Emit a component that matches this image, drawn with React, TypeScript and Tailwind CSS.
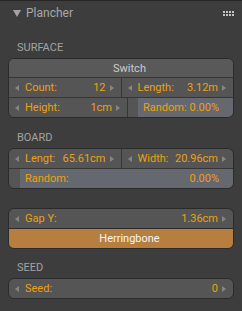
import React from "react";

const FONT = { fontFamily: 'Roboto, "Open Sans", sans-serif' };

function Arrow({ dir }: { dir: "left" | "right" }) {
  return (
    <svg width="4" height="6" viewBox="0 0 4 6" className="shrink-0">
      <path d={dir === "left" ? "M4 0 L0 3 L4 6 Z" : "M0 0 L4 3 L0 6 Z"} fill="#858585" />
    </svg>
  );
}

function NumField({ label, value }: { label: string; value: string }) {
  return (
    <div className="flex h-[19px] min-w-0 flex-1 items-center pl-[6px] pr-[7px]">
      <Arrow dir="left" />
      <span className="ml-[6px] text-[#eba10f]">{label}</span>
      <span className="ml-auto mr-[4px] text-[#eba10f]">{value}</span>
      <Arrow dir="right" />
    </div>
  );
}

function SliderField({ label, value, inset }: { label: string; value: string; inset: string }) {
  return (
    <div className="flex h-[19px] min-w-0 flex-1">
      <div className={`flex flex-1 items-center rounded-br-[5px] bg-[#666870] pl-[5px] pr-[14px] ${inset}`}>
        <span className="text-[#eba10f]">{label}</span>
        <span className="ml-auto text-[#eba10f]">{value}</span>
      </div>
    </div>
  );
}

function SectionLabel({ text, className }: { text: string; className: string }) {
  return (
    <div className={`h-[16px] pl-[9px] text-[11px] leading-[16px] text-[#a3a3a3] ${className}`}>{text}</div>
  );
}

export default function App() {
  return (
    <div
      className="h-[311px] w-[242px] overflow-hidden border-t border-[#262626] bg-[#3d3d3d] text-[11px] leading-[19px]"
      style={FONT}
    >
      {/* Header */}
      <div className="flex h-[24px] items-center pl-[13px] pr-[8px]">
        <svg width="8" height="7" viewBox="0 0 8 7">
          <path d="M0 0 H8 L4 7 Z" fill="#a2a2a2" />
        </svg>
        <span className="ml-[5px] text-[12px] text-[#a8a8a8]">Plancher</span>
        <div className="ml-auto grid grid-cols-4 gap-[1px]">
          {Array.from({ length: 8 }).map((_, i) => (
            <span key={i} className="h-[2px] w-[2px] bg-[#c4c4c4]" />
          ))}
        </div>
      </div>

      <div className="px-[8px]">
        <SectionLabel text="SURFACE" className="mt-[15px]" />
        <div className="mt-[2px] overflow-hidden rounded-[6px] border border-[#2b2b2b] bg-[#555555]">
          <div className="h-[19px] border-b border-[#363636] bg-[#595959] pl-[17px] text-center text-[#cccccc]">
            Switch
          </div>
          <div className="flex border-b border-[#363636]">
            <NumField label="Count:" value="12" />
            <div className="w-px bg-[#363636]" />
            <NumField label="Length:" value="3.12m" />
          </div>
          <div className="flex">
            <NumField label="Height:" value="1cm" />
            <div className="w-px bg-[#363636]" />
            <SliderField label="Random:" value="0.00%" inset="ml-[10px]" />
          </div>
        </div>

        <SectionLabel text="BOARD" className="mt-[12px]" />
        <div className="mt-[2px] overflow-hidden rounded-[6px] border border-[#2b2b2b] bg-[#555555]">
          <div className="flex border-b border-[#363636]">
            <NumField label="Lengt:" value="65.61cm" />
            <div className="w-px bg-[#363636]" />
            <NumField label="Width:" value="20.96cm" />
          </div>
          <div className="flex">
            <SliderField label="Random:" value="0.00%" inset="ml-[11px]" />
          </div>
        </div>

        <div className="mt-[19px] overflow-hidden rounded-[6px] border border-[#2b2b2b] bg-[#555555]">
          <div className="flex border-b border-[#2b2b2b]">
            <NumField label="Gap Y:" value="1.36cm" />
          </div>
          <div className="h-[19px] bg-[#b67e3f] pl-[17px] text-center text-[#f4f4f4]">Herringbone</div>
        </div>

        <SectionLabel text="SEED" className="mt-[11px]" />
        <div className="mt-[2px] overflow-hidden rounded-[6px] border border-[#2b2b2b] bg-[#555555]">
          <div className="flex">
            <NumField label="Seed:" value="0" />
          </div>
        </div>
      </div>
    </div>
  );
}
